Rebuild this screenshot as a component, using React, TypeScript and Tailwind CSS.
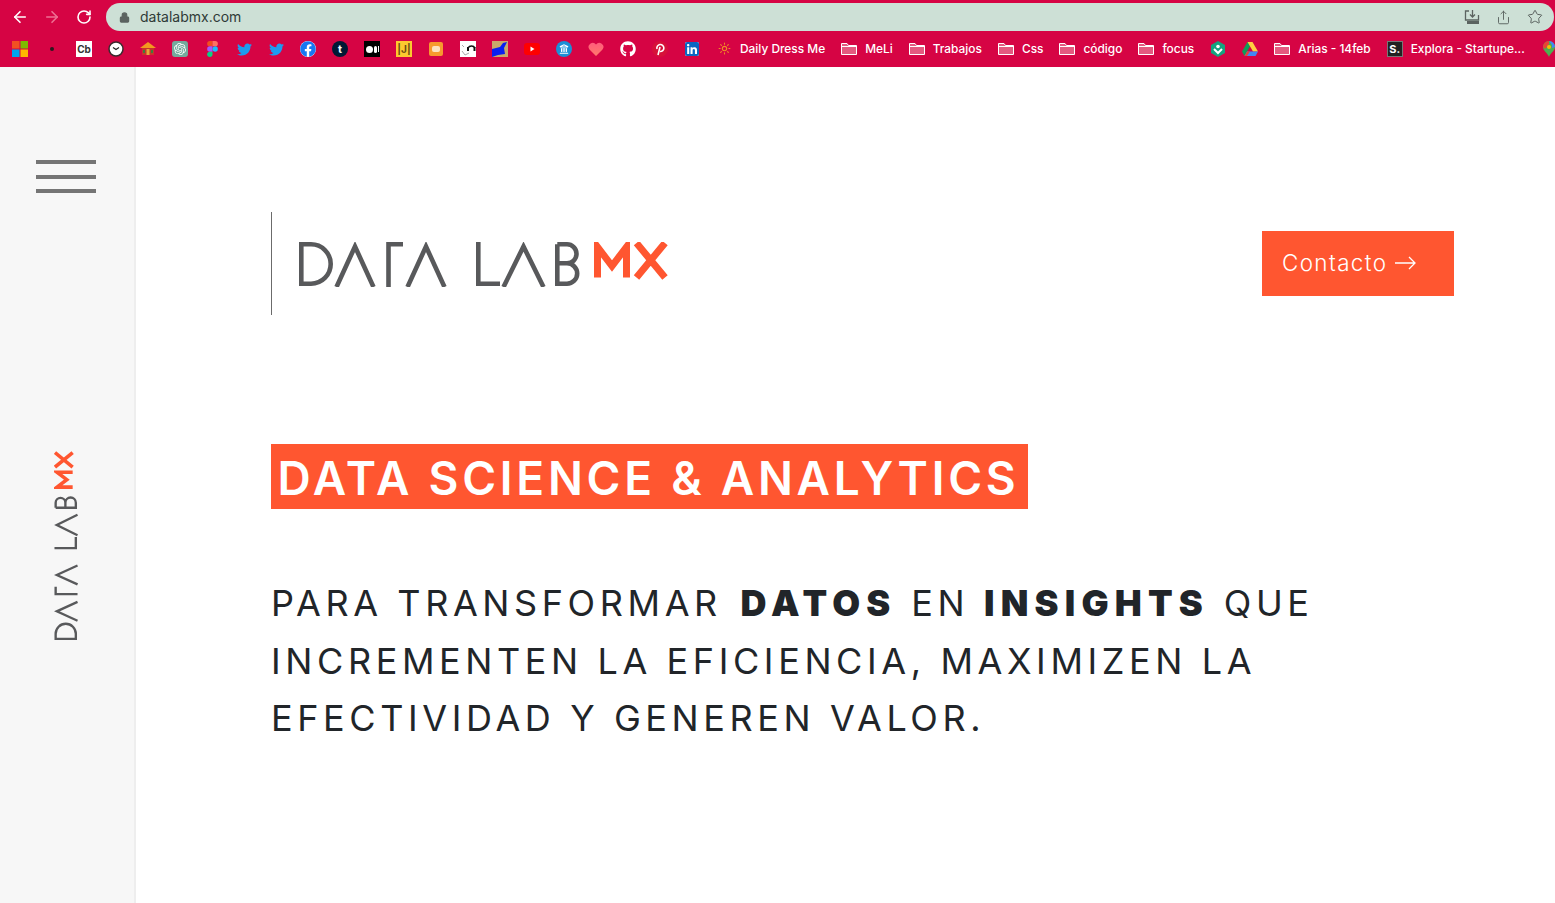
import { ArrowLeft, ArrowRight, RotateCw, Lock, Share, Star, Sun, Landmark } from "lucide-react";
import { FaFacebook, FaGithub, FaLinkedin, FaTwitter } from "react-icons/fa";
import { SiOpenai } from "react-icons/si";
import type { ReactNode } from "react";

const GRAY = "#58595b";
const ORANGE = "#ff5630";

function LogoMarks() {
  return (
    <>
      <g fill="none" stroke={GRAY} strokeWidth="4.6">
        <path d="M2.3 2.3H12A19.7 19.7 0 0 1 12 41.7H2.3Z" />
        <path d="M37.5 45L56 4.5L74.5 45" />
        <path d="M89.5 45V2.3H104" />
        <path d="M108.5 45L127 4.5L145.500 45" />
        <path d="M179.300 0V41.700H201" />
        <path d="M204.500 45L224.500 4.500L244.500 45" />
        <path d="M258.300 2.300H268A9.500 9.500 0 0 1 268 21.300H258.300M268 21.300A10.200 10.200 0 0 1 268 41.700H258.300V2.300" />
      </g>
      <g fill="none" stroke={ORANGE} strokeWidth="7">
        <path d="M298.500 35.500V5L313 24L327.500 5V35.500" />
        <path d="M337.500 1L366 35.500M366 1L337.500 35.500" />
      </g>
    </>
  );
}

function Folder() {
  return (
    <svg viewBox="0 0 16 12" className="w-4 h-3 shrink-0">
      <path d="M.5 11.500V.5H6L7.500 2.500H15.500V11.500Z" fill="#e45a80" stroke="#fff" />
      <path d="M.5 3.500H15.500" stroke="#fff" />
    </svg>
  );
}

function Mark({ children }: { children: ReactNode }) {
  return <span className="w-4 h-4 shrink-0 flex items-center justify-center overflow-hidden">{children}</span>;
}

const ICONS: ReactNode[] = [
  <svg viewBox="0 0 16 16" className="w-4 h-4">
    <rect width="7.500" height="7.500" fill="#f25022" />
    <rect x="8.500" width="7.500" height="7.500" fill="#7fba00" />
    <rect y="8.500" width="7.500" height="7.500" fill="#00a4ef" />
    <rect x="8.500" y="8.500" width="7.500" height="7.500" fill="#ffb900" />
  </svg>,
  <span className="w-1 h-1 rounded-full bg-[#2a1a1e]" />,
  <span className="w-4 h-4 bg-white text-[#333] text-[10px] font-bold leading-4 text-center">Cb</span>,
  <svg viewBox="0 0 16 16" className="w-4 h-4">
    <circle cx="8" cy="8" r="7" fill="#fff" stroke="#3a2a2e" strokeWidth="1.500" />
    <path d="M5 6.500L8 8.500L11 6.500" fill="none" stroke="#222" strokeWidth="1.200" />
  </svg>,
  <svg viewBox="0 0 16 16" className="w-4 h-4">
    <path d="M0 7L8 1L16 7Z" fill="#f39a1f" />
    <rect x="2" y="7" width="12" height="7" fill="#c7352b" />
    <rect x="6.500" y="8" width="3" height="6" fill="#e9a53a" />
    <rect x="3" y="9" width="2" height="3" fill="#3f7d3c" />
    <rect x="11" y="9" width="2" height="3" fill="#3f7d3c" />
  </svg>,
  <span className="w-4 h-4 rounded-[3px] bg-[#74aa9c] text-white flex items-center justify-center">
    <SiOpenai size={12} />
  </span>,
  <svg viewBox="0 0 12 18" className="w-[11px] h-4">
    <path d="M3 0H6V6H3A3 3 0 0 1 3 0Z" fill="#f24e1e" />
    <path d="M6 0H9A3 3 0 0 1 9 6H6Z" fill="#ff7262" />
    <path d="M3 6H6V12H3A3 3 0 0 1 3 6Z" fill="#a259ff" />
    <circle cx="9" cy="9" r="3" fill="#1abcfe" />
    <path d="M3 12H6V15A3 3 0 1 1 3 12Z" fill="#0acf83" />
  </svg>,
  <FaTwitter size={15} color="#1d9bf0" />,
  <FaTwitter size={15} color="#1d9bf0" />,
  <span className="w-4 h-4 rounded-full bg-white flex items-center justify-center">
    <FaFacebook size={16} color="#1877f2" />
  </span>,
  <span className="w-4 h-4 rounded-full bg-[#001935] text-white text-[11px] font-bold leading-4 text-center">t</span>,
  <span className="w-4 h-4 bg-black flex items-center justify-center gap-px">
    <span className="w-[7px] h-[7px] rounded-full bg-white" />
    <span className="w-[3px] h-[7px] rounded-full bg-white" />
    <span className="w-px h-[6px] bg-white" />
  </span>,
  <span className="w-4 h-4 bg-[#fdc92f] text-[#6b4a12] text-[10px] font-bold leading-4 text-center">|J|</span>,
  <span className="w-[14px] h-[14px] rounded-[2px] bg-[#f79a2e] flex items-center justify-center">
    <span className="w-2 h-[6px] rounded-[2px] bg-[#fde3c2]" />
  </span>,
  <svg viewBox="0 0 16 16" className="w-4 h-4">
    <rect width="16" height="16" fill="#fff" />
    <path d="M8 7A4 4 0 0 1 15 7" fill="none" stroke="#111" strokeWidth="1.500" />
    <rect x="7" y="6" width="2" height="4" fill="#111" />
    <rect x="13.500" y="6" width="2" height="4" fill="#111" />
    <path d="M2 10L5 14L9 12M2 4L4 6" fill="none" stroke="#aaa" />
  </svg>,
  <svg viewBox="0 0 16 16" className="w-4 h-4">
    <rect width="16" height="16" fill="#c9a86a" />
    <path d="M0 16V8L8 6L11 2L15 1L12 7L13 13L6 14Z" fill="#0a1ef0" />
  </svg>,
  <svg viewBox="0 0 16 12" className="w-4 h-3">
    <rect width="16" height="12" rx="3" fill="#ff0000" />
    <path d="M6.500 3.500L10.500 6L6.500 8.500Z" fill="#fff" />
  </svg>,
  <span className="w-4 h-4 rounded-full bg-[#1b8fd6] text-white flex items-center justify-center">
    <Landmark size={10} strokeWidth={2.500} />
  </span>,
  <svg viewBox="0 0 16 16" className="w-4 h-4">
    <defs>
      <linearGradient id="heart" x1="0" y1="0" x2="0" y2="1">
        <stop offset="0" stopColor="#ff5c7c" />
        <stop offset="1" stopColor="#ff7a6a" />
      </linearGradient>
    </defs>
    <path d="M8 15L1.500 8.500A4 4 0 0 1 8 3.500A4 4 0 0 1 14.500 8.500Z" fill="url(#heart)" />
  </svg>,
  <span className="w-4 h-4 rounded-full bg-[#d60444] text-white">
    <FaGithub size={16} />
  </span>,
  <span className="w-4 h-4 flex items-center justify-center">
    <svg viewBox="0 0 16 16" className="w-4 h-4">
      <circle cx="8" cy="8" r="8" fill="#d6113a" />
      <path d="M6 14L8 6M5 8A3.500 3.500 0 1 1 8 10.500" fill="none" stroke="#fff" strokeWidth="1.600" />
    </svg>
  </span>,
  <span className="w-[14px] h-[14px] bg-white rounded-[2px] flex items-center justify-center overflow-hidden">
    <FaLinkedin size={16} color="#0a66c2" />
  </span>,
];

function Bookmark({ icon, label }: { icon: ReactNode; label: string }) {
  return (
    <div className="flex items-center gap-2 px-2 shrink-0">
      {icon}
      <span className="text-[11.900px] font-medium text-white whitespace-nowrap">{label}</span>
    </div>
  );
}

function BrowserBar() {
  return (
    <header className="h-[67px] bg-[#d60444] shrink-0 flex flex-col">
      <div className="h-[33px] pt-[3px] flex">
        <div className="w-[106px] h-7 shrink-0 flex items-center text-white">
          <span className="w-[40px] flex justify-center">
            <ArrowLeft size={18} strokeWidth={2.200} />
          </span>
          <span className="w-[24px] flex justify-center text-[#ee6f92]">
            <ArrowRight size={18} strokeWidth={2.200} />
          </span>
          <span className="w-[40px] flex justify-center">
            <RotateCw size={16} strokeWidth={2.400} />
          </span>
        </div>
        <div className="flex-1 h-7 mr-px rounded-full bg-[#cde0d6] flex items-center pl-[13px] pr-[11px] text-[#5b6360]">
          <Lock size={11} fill="currentColor" strokeWidth={2.500} />
          <span className="ml-[10px] text-sm text-[#2f3a37]">datalabmx.com</span>
          <div className="ml-auto flex items-center gap-4">
            <svg viewBox="0 0 16 16" className="w-4 h-4" fill="none" stroke="currentColor" strokeWidth="1.300">
              <path d="M5 2H1.500V11H14.500V6M8.500 1V8M6 5.500L8.500 8L11 5.500" />
              <rect x="3" y="12" width="12" height="3" fill="currentColor" stroke="none" />
            </svg>
            <Share size={15} strokeWidth={1.500} />
            <Star size={16} strokeWidth={1.500} />
          </div>
        </div>
      </div>
      <nav className="h-[32px] pl-[4px] flex items-center overflow-hidden">
        {ICONS.map((icon, i) => (
          <div key={i} className="px-2 shrink-0">
            <Mark>{icon}</Mark>
          </div>
        ))}
        <Bookmark icon={<Mark><Sun size={13} color="#f08a24" /></Mark>} label="Daily Dress Me" />
        <Bookmark icon={<Folder />} label="MeLi" />
        <Bookmark icon={<Folder />} label="Trabajos" />
        <Bookmark icon={<Folder />} label="Css" />
        <Bookmark icon={<Folder />} label="código" />
        <Bookmark icon={<Folder />} label="focus" />
        <div className="px-2 shrink-0">
          <Mark>
            <svg viewBox="0 0 16 16" className="w-4 h-4">
              <path d="M8 0L15 4V12L8 16L1 12V4Z" fill="#14a37f" />
              <circle cx="8" cy="5.500" r="1.800" fill="#fff" />
              <path d="M4 8L8 12L12 8" fill="none" stroke="#fff" strokeWidth="2" />
            </svg>
          </Mark>
        </div>
        <div className="px-2 shrink-0">
          <Mark>
            <svg viewBox="0 0 16 14" className="w-4 h-[14px]">
              <path d="M5.500 0H10.500L5 9.500L2.500 14L0 9.500Z" fill="#0f9d58" />
              <path d="M5.500 0H10.500L16 9.500H11Z" fill="#ffcd40" />
              <path d="M5 9.500H16L13.500 14H2.500Z" fill="#4285f4" />
              <path d="M2.500 14L5 9.500H8L5 14Z" fill="#ea4335" />
            </svg>
          </Mark>
        </div>
        <Bookmark icon={<Folder />} label="Arias - 14feb" />
        <Bookmark
          icon={
            <span className="w-4 h-4 shrink-0 bg-[#222] border border-[#777] text-white text-[11px] font-bold leading-[14px] text-center">
              S.
            </span>
          }
          label="Explora - Startupe..."
        />
        <div className="px-2 shrink-0">
          <Mark>
            <svg viewBox="0 0 12 16" className="w-3 h-4">
              <path d="M6 0A6 6 0 0 1 12 6C12 10 8 11 6 16C4 11 0 10 0 6A6 6 0 0 1 6 0Z" fill="#4caf50" />
              <path d="M6 0A6 6 0 0 1 12 6L9 7V4Z" fill="#4285f4" />
              <path d="M0 6A6 6 0 0 1 6 0V3L2 8Z" fill="#ea4335" />
              <circle cx="6" cy="6" r="2" fill="#fbbc04" />
            </svg>
          </Mark>
        </div>
      </nav>
    </header>
  );
}

export default function App() {
  return (
    <div className="w-[1555px] h-[903px] overflow-hidden flex flex-col bg-white font-['Inter',sans-serif]">
      <BrowserBar />
      <div className="flex-1 flex min-h-0">
        <aside className="w-[136px] shrink-0 bg-[#f7f7f7] border-r-2 border-[#eeeeee] flex flex-col items-center pr-[2px]">
          <div className="mt-[93px] w-[60px] flex flex-col gap-[10.500px]">
            <span className="h-1 bg-[#757575]" />
            <span className="h-1 bg-[#757575]" />
            <span className="h-1 bg-[#757575]" />
          </div>
          <svg viewBox="0 0 45 369" className="mt-[258px] w-6 h-[189px]">
            <g transform="translate(0 369) rotate(-90)">
              <LogoMarks />
            </g>
          </svg>
        </aside>
        <main className="flex-1 pl-[135px] pr-[101px] pt-[145px] min-w-0">
          <div className="flex items-center justify-between">
            <div className="h-[103px] border-l border-[#6b6b6b] pl-[27px] flex items-start pt-[30px]">
              <svg viewBox="0 0 369 45" className="w-[369px] h-[45px]">
                <LogoMarks />
              </svg>
            </div>
            <button className="w-[192px] h-[65px] mb-px bg-[#ff5630] text-white text-[22.400px] font-light tracking-[1.400px] pl-5 flex items-center gap-2">
              Contacto
              <svg viewBox="0 0 21 14" className="w-[21px] h-[14px]" fill="none" stroke="#fff" strokeWidth="1.300">
                <path d="M0 7H20M14 1L20 7L14 13" />
              </svg>
            </button>
          </div>
          <h1 className="mt-[129px] w-[757px] h-[65px] bg-[#ff5630] text-white text-[46px] font-semibold leading-[69px] tracking-[3.750px] pl-[6.500px] whitespace-nowrap">
            DATA SCIENCE &amp; ANALYTICS
          </h1>
          <p className="mt-[66px] w-[1100px] text-[36px] font-normal leading-[57.600px] tracking-[4.600px] text-[#212529]">
            PARA TRANSFORMAR <strong className="ml-1 font-black tracking-[6.200px]">DATOS</strong> EN{" "}
            <strong className="font-black tracking-[6.200px]">INSIGHTS</strong> QUE INCREMENTEN LA EFICIENCIA, MAXIMIZEN
            LA EFECTIVIDAD Y GENEREN VALOR.
          </p>
        </main>
      </div>
    </div>
  );
}
